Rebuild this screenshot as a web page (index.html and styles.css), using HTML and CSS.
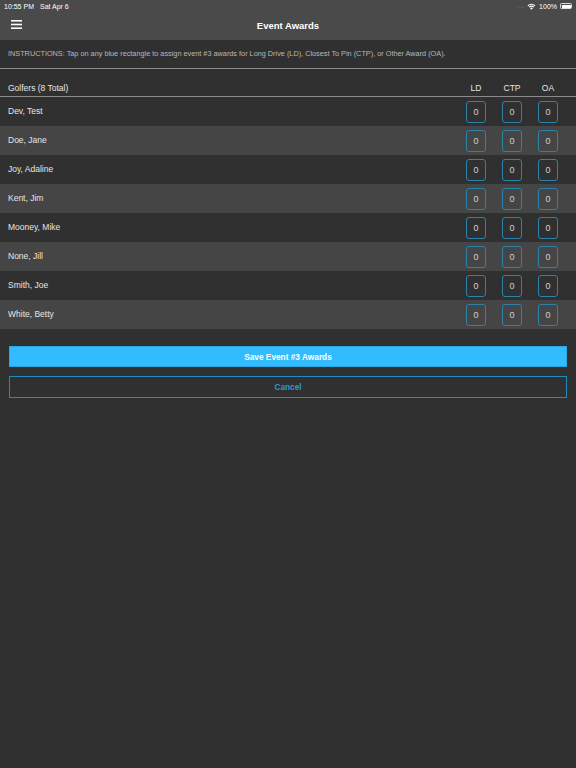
FILE: index.html
```html
<!DOCTYPE html>
<html>
<head>
<meta charset="utf-8">
<link rel="stylesheet" href="styles.css">
</head>
<body>
<div class="app">
  <header class="topbar">
    <div class="status">
      <div class="status-left"><span>10:55 PM</span><span>Sat Apr 6</span></div>
      <div class="status-right">
        <span class="dots">....</span>
        <svg class="wifi" width="9" height="7" viewBox="0 0 18 14"><path d="M9 13.5 L6.2 10.4 A4 4 0 0 1 11.8 10.4 Z M3.6 7.6 A8 8 0 0 1 14.4 7.6 L12.9 9.2 A5.8 5.8 0 0 0 5.1 9.2 Z M1 4.8 A12 12 0 0 1 17 4.8 L15.5 6.4 A9.8 9.8 0 0 0 2.5 6.4 Z" fill="#fff"/></svg>
        <span>100%</span>
        <span class="battery"><span class="battery-fill"></span></span>
      </div>
    </div>
    <nav class="navbar">
      <svg class="menu" width="11" height="9" viewBox="0 0 11 9"><rect x="0" y="0" width="11" height="1.6" fill="#fff"/><rect x="0" y="3.7" width="11" height="1.6" fill="#fff"/><rect x="0" y="7.4" width="11" height="1.6" fill="#fff"/></svg>
      <h1 class="title">Event Awards</h1>
    </nav>
  </header>
  <p class="instructions">INSTRUCTIONS: Tap on any blue rectangle to assign event #3 awards for Long Drive (LD), Closest To Pin (CTP), or Other Award (OA).</p>
  <div class="table">
    <div class="thead">
      <span class="name">Golfers (8 Total)</span>
      <span class="col">LD</span><span class="col">CTP</span><span class="col">OA</span>
    </div>
    <div class="row"><span class="name">Dev, Test</span><span class="col"><span class="box">0</span></span><span class="col"><span class="box">0</span></span><span class="col"><span class="box">0</span></span></div>
    <div class="row alt"><span class="name">Doe, Jane</span><span class="col"><span class="box">0</span></span><span class="col"><span class="box">0</span></span><span class="col"><span class="box">0</span></span></div>
    <div class="row"><span class="name">Joy, Adaline</span><span class="col"><span class="box">0</span></span><span class="col"><span class="box">0</span></span><span class="col"><span class="box">0</span></span></div>
    <div class="row alt"><span class="name">Kent, Jim</span><span class="col"><span class="box">0</span></span><span class="col"><span class="box">0</span></span><span class="col"><span class="box">0</span></span></div>
    <div class="row"><span class="name">Mooney, Mike</span><span class="col"><span class="box">0</span></span><span class="col"><span class="box">0</span></span><span class="col"><span class="box">0</span></span></div>
    <div class="row alt"><span class="name">None, Jill</span><span class="col"><span class="box">0</span></span><span class="col"><span class="box">0</span></span><span class="col"><span class="box">0</span></span></div>
    <div class="row"><span class="name">Smith, Joe</span><span class="col"><span class="box">0</span></span><span class="col"><span class="box">0</span></span><span class="col"><span class="box">0</span></span></div>
    <div class="row alt"><span class="name">White, Betty</span><span class="col"><span class="box">0</span></span><span class="col"><span class="box">0</span></span><span class="col"><span class="box">0</span></span></div>
  </div>
  <div class="actions">
    <button class="btn save">Save Event #3 Awards</button>
    <button class="btn cancel">Cancel</button>
  </div>
</div>
</body>
</html>
```
FILE: styles.css
```css
* { box-sizing: border-box; }
html, body { margin: 0; padding: 0; }
body {
  background: #303030;
  font-family: "Liberation Sans", Arial, sans-serif;
  color: #e6e6e6;
  width: 576px;
  height: 768px;
  overflow: hidden;
}
.app { display: flex; flex-direction: column; }
.topbar { background: #4a4a4a; height: 40px; display: flex; flex-direction: column; }
.status {
  height: 12px;
  display: flex;
  justify-content: space-between;
  align-items: center;
  padding: 0 4px 0 4px;
  font-size: 7px;
  color: #fff;
}
.status-left { display: flex; gap: 6px; }
.status-right { display: flex; align-items: center; gap: 3px; }
.dots { color: #888; letter-spacing: 0; font-size: 6px; }
.battery { width: 12px; height: 6px; border: 1px solid #ddd; border-radius: 1.5px; padding: 0.5px; display: flex; }
.battery-fill { flex: 1; background: #fff; }
.navbar {
  flex: 1;
  position: relative;
  display: flex;
  align-items: center;
  justify-content: center;
}
.menu { position: absolute; left: 11px; top: 8px; }
.title { margin: 0; font-size: 9.5px; font-weight: bold; color: #fff; padding-bottom: 1px; }
.instructions {
  margin: 0;
  height: 29px;
  padding: 9px 0 0 8px;
  font-size: 7.3px;
  color: #b8b8b8;
  border-bottom: 1px solid #8a8a8a;
}
.table { display: flex; flex-direction: column; }
.thead, .row { display: flex; align-items: center; padding-left: 8px; padding-right: 10px; }
.thead {
  height: 28px;
  padding-top: 11px;
  font-size: 8.5px;
  color: #e6e6e6;
  border-bottom: 1px solid #8a8a8a;
}
.row { height: 29px; font-size: 8.5px; color: #e6e6e6; padding-bottom: 2px; }
.row.alt { background: #454545; }
.name { flex: 1; }
.col { width: 36px; display: flex; justify-content: center; text-align: center; }
.row .col { padding-top: 3px; }
.box {
  width: 20px;
  height: 22px;
  border: 1px solid #2b82aa;
  border-radius: 3px;
  display: flex;
  align-items: center;
  justify-content: center;
  font-size: 9px;
  color: #d0d0d0;
}
.actions { display: flex; flex-direction: column; gap: 9px; padding: 17px 9px 0 9px; }
.btn {
  font-family: inherit;
  font-size: 8.3px;
  font-weight: bold;
  height: 22px;
  width: 100%;
  margin: 0;
  border-radius: 0;
  cursor: pointer;
}
.save { background: #33bbff; color: #fff; border: 1px solid #2aa6e0; height: 21px; }
.cancel { background: transparent; color: #2b9bd0; border: 1px solid #1f8dc0; }
```
